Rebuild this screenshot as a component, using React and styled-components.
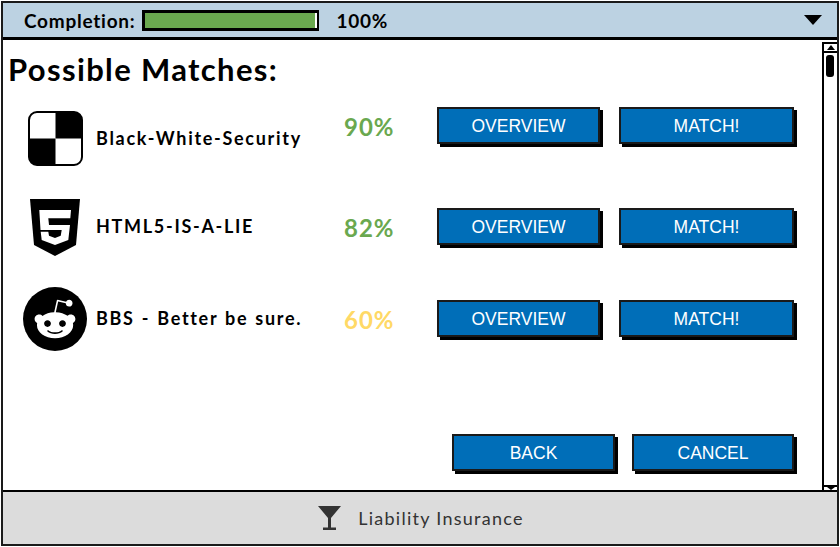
import styled, { createGlobalStyle } from 'styled-components'
import { FaRedditAlien } from 'react-icons/fa'

const GlobalStyle = createGlobalStyle`
  html, body {
    margin: 0;
    padding: 0;
    background: #fff;
  }
  * {
    box-sizing: border-box;
  }
`

const Frame = styled.div`
  width: 838px;
  height: 545px;
  margin: 1px;
  border: 2px solid #1a1a1a;
  display: flex;
  flex-direction: column;
  font-family: Lato, 'Liberation Sans', sans-serif;
  color: #000;
  overflow: hidden;
`

const Header = styled.header`
  height: 37px;
  flex: none;
  background: #bcd2e2;
  border-bottom: 3px solid #000;
  display: flex;
  align-items: center;
  padding: 0 15px 0 21px;
  font-size: 19px;
  font-weight: 700;
  letter-spacing: 0.75px;
`

const ProgressTrack = styled.div`
  width: 177px;
  height: 21px;
  margin-left: 7px;
  border: 3px solid #000;
  border-right-width: 2px;
  background: #fff;
  padding: 0 2px 0 0;
`

const ProgressFill = styled.div`
  height: 100%;
  background: #6aa84f;
`

const ProgressValue = styled.span`
  margin-left: 17px;
  flex: 1;
`

const Body = styled.div`
  flex: 1;
  display: flex;
  min-height: 0;
`

const Content = styled.main`
  flex: 1;
  display: flex;
  flex-direction: column;
  padding: 10px 28px 19px 5px;
`

const Title = styled.h1`
  margin: 0;
  font-size: 31px;
  line-height: 38px;
  font-weight: 700;
  letter-spacing: 1.35px;
`

const Rows = styled.div`
  display: flex;
  flex-direction: column;
  flex: 1;
`

const Row = styled.div`
  display: flex;
  align-items: center;
  height: ${(props) => props.$height}px;
  margin-top: ${(props) => props.$gap}px;
`

const IconCell = styled.div`
  width: 88px;
  padding: 2px 15px 0 21px;
  flex: none;
  display: flex;
  justify-content: center;
`

const Name = styled.div`
  width: 248px;
  flex: none;
  font-size: 18px;
  font-weight: 700;
  letter-spacing: 1.7px;
  word-spacing: 1px;
  white-space: nowrap;
`

const Side = styled.div`
  display: flex;
  align-items: center;
  margin-bottom: ${(props) => props.$lift}px;
`

const Percent = styled.div`
  width: 93px;
  flex: none;
  padding-top: 2px;
  font-size: 24px;
  font-weight: 700;
  letter-spacing: 1px;
  color: ${(props) => props.$color};
`

const Button = styled.button`
  width: ${(props) => props.$width}px;
  height: 37px;
  flex: none;
  border: 2px solid #1a1a1a;
  border-radius: 0;
  box-shadow: 3px 3px 0 #000;
  background: #006eb8;
  color: #fff;
  font-family: 'Liberation Sans', Arial, sans-serif;
  font-size: 17.5px;
  padding: 2px 0 0;
`

const Buttons = styled.div`
  display: flex;
  gap: 19px;
`

const Actions = styled.div`
  display: flex;
  justify-content: flex-end;
  gap: 17px;
`

const LogoSvg = styled.svg`
  display: block;
  flex: none;
`

const Badge = styled.div`
  width: 64px;
  height: 64px;
  border-radius: 50%;
  background: #000;
  color: #fff;
  font-size: 44px;
  display: flex;
  align-items: center;
  justify-content: center;
  flex: none;
`

const Scrollbar = styled.aside`
  width: 15px;
  flex: none;
  margin-top: 2px;
  border-left: 2px solid #000;
  display: flex;
  flex-direction: column;
  justify-content: space-between;
`

const ScrollUp = styled.div`
  height: 11px;
  background: #fff;
  border-top: 2px solid #000;
  border-bottom: 2px solid #000;
  display: flex;
  align-items: center;
  justify-content: center;
`

const ScrollThumb = styled.div`
  width: 8px;
  height: 22px;
  margin: 2px 0 0 2px;
  border-radius: 3px;
  background: #000;
`

const ScrollDown = styled.div`
  height: 5px;
  border-top: 2px solid #000;
  display: flex;
  align-items: flex-end;
  justify-content: center;
`

const Footer = styled.footer`
  height: 54px;
  flex: none;
  background: #dcdcdc;
  border-top: 2px solid #000;
  display: flex;
  align-items: center;
  justify-content: center;
  gap: 17px;
  padding-left: 2px;
  font-size: 18px;
  letter-spacing: 1.27px;
  color: #333;
`

function Triangle() {
  return (
    <svg width="18" height="10" viewBox="0 0 18 10">
      <path d="M0 0H18L9 10Z" fill="#000" />
    </svg>
  )
}

function CheckerIcon() {
  return (
    <LogoSvg width="55" height="55" viewBox="0 0 55 55">
      <rect x="1" y="1" width="53" height="53" rx="8" fill="#fff" />
      <path d="M27.5 1H46a8 8 0 0 1 8 8V27.5H27.5Z" fill="#000" />
      <path d="M1 27.5H27.5V54H9a8 8 0 0 1-8-8Z" fill="#000" />
      <rect x="1" y="1" width="53" height="53" rx="8" fill="none" stroke="#000" strokeWidth="2" />
    </LogoSvg>
  )
}

function Html5Icon() {
  return (
    <LogoSvg width="50" height="57" viewBox="0 0 50 57">
      <path d="M0 0H50L46 46L25 57L4 46L0 0Z" fill="#000" />
      <path
        d="M9.3 11H41L40.3 19.3H18.3L19 26H40L38.3 41L25 46L11.7 41L10.7 32.7H18.3L19 36.7L25 39L30.7 36.7L31.7 31H10.5Z"
        fill="#fff"
      />
    </LogoSvg>
  )
}

function MartiniIcon() {
  return (
    <svg width="23" height="24" viewBox="0 0 23 24">
      <path d="M0 0H23L13 12V21.5H18V24H5V21.5H10V12Z" fill="#333" />
    </svg>
  )
}

const matches = [
  {
    name: 'Black-White-Security',
    percent: '90%',
    color: '#6aa84f',
    icon: <CheckerIcon />,
    height: 55,
    gap: 22,
    lift: 24,
  },
  {
    name: 'HTML5-IS-A-LIE',
    percent: '82%',
    color: '#6aa84f',
    icon: <Html5Icon />,
    height: 58,
    gap: 32,
    lift: 0,
  },
  {
    name: 'BBS - Better be sure.',
    percent: '60%',
    color: '#ffd966',
    icon: (
      <Badge>
        <FaRedditAlien />
      </Badge>
    ),
    height: 64,
    gap: 31,
    lift: 0,
  },
]

export default function App() {
  return (
    <>
      <GlobalStyle />
      <Frame>
        <Header>
          <span>Completion:</span>
          <ProgressTrack>
            <ProgressFill />
          </ProgressTrack>
          <ProgressValue>100%</ProgressValue>
          <Triangle />
        </Header>
        <Body>
          <Content>
            <Title>Possible Matches:</Title>
            <Rows>
              {matches.map((match) => (
                <Row key={match.name} $height={match.height} $gap={match.gap}>
                  <IconCell>{match.icon}</IconCell>
                  <Name>{match.name}</Name>
                  <Side $lift={match.lift}>
                    <Percent $color={match.color}>{match.percent}</Percent>
                    <Buttons>
                      <Button $width={163}>OVERVIEW</Button>
                      <Button $width={175}>MATCH!</Button>
                    </Buttons>
                  </Side>
                </Row>
              ))}
            </Rows>
            <Actions>
              <Button $width={163}>BACK</Button>
              <Button $width={162}>CANCEL</Button>
            </Actions>
          </Content>
          <Scrollbar>
            <div>
              <ScrollUp>
                <svg width="8" height="5" viewBox="0 0 8 5">
                  <path d="M0 5H8L4 0Z" fill="#000" />
                </svg>
              </ScrollUp>
              <ScrollThumb />
            </div>
            <ScrollDown>
              <svg width="8" height="3" viewBox="0 0 8 3">
                <path d="M0 0H8L4 3Z" fill="#000" />
              </svg>
            </ScrollDown>
          </Scrollbar>
        </Body>
        <Footer>
          <MartiniIcon />
          <span>Liability Insurance</span>
        </Footer>
      </Frame>
    </>
  )
}
